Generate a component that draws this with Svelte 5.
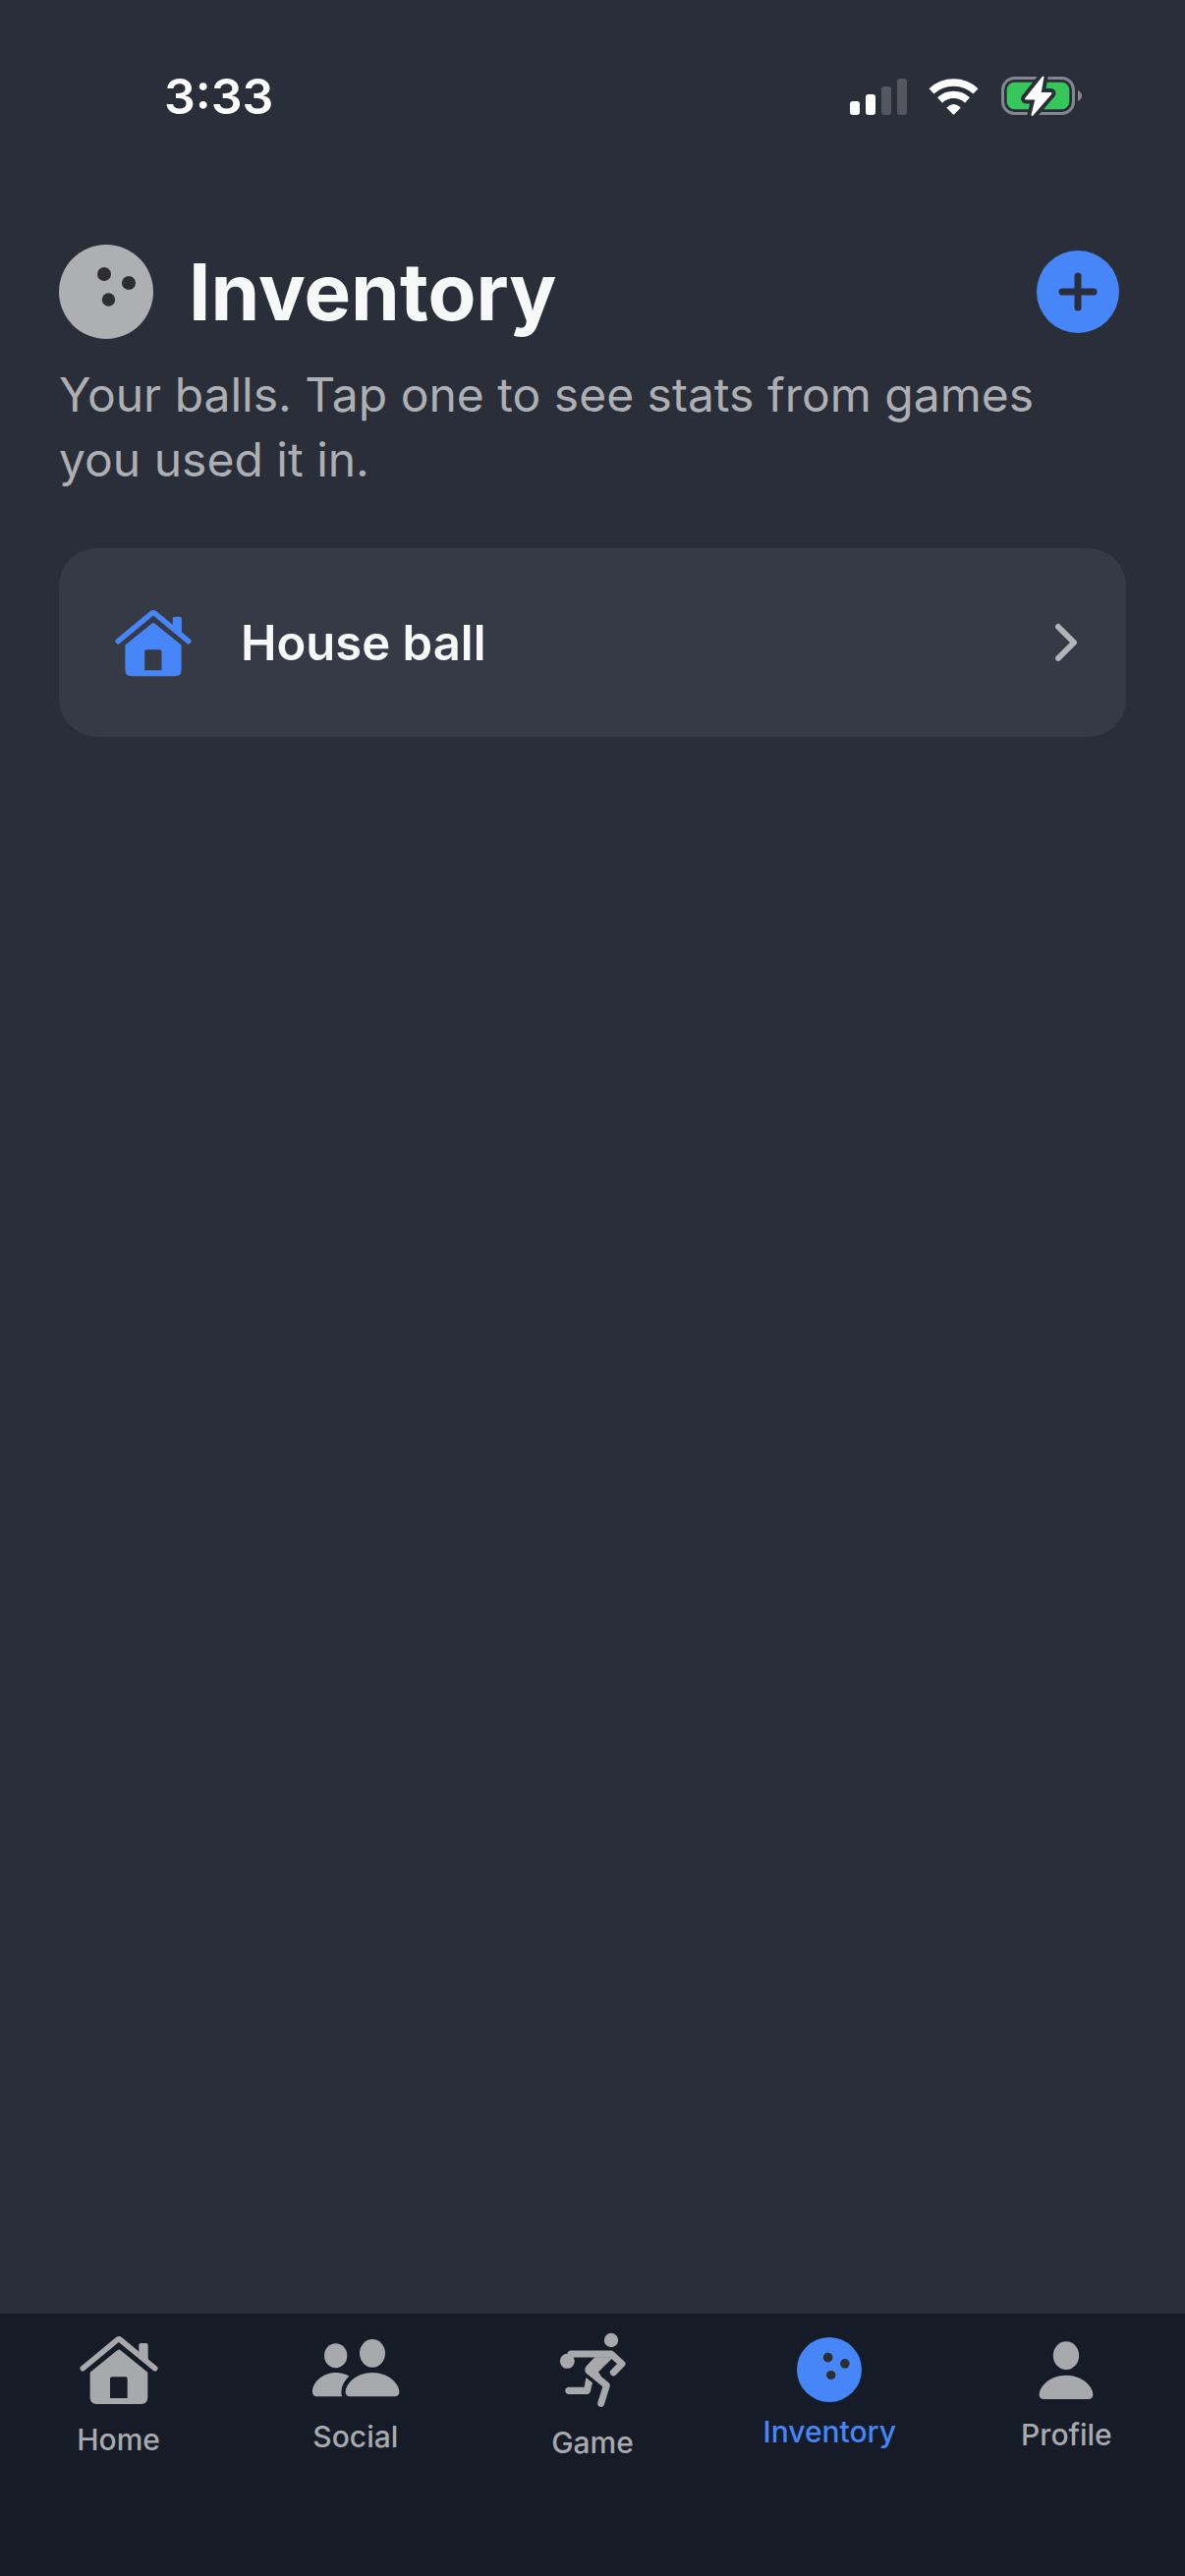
<script lang="ts">
  type TabId = 'home' | 'social' | 'game' | 'inventory' | 'profile';

  const tabs: { id: TabId; label: string }[] = [
    { id: 'home', label: 'Home' },
    { id: 'social', label: 'Social' },
    { id: 'game', label: 'Game' },
    { id: 'inventory', label: 'Inventory' },
    { id: 'profile', label: 'Profile' },
  ];

  const balls = [{ id: 1, name: 'House ball' }];

  let active = $state<TabId>('inventory');
</script>

{#snippet house(width: number, height: number)}
  <svg {width} {height} viewBox="121 93 240 246" aria-hidden="true">
    <path d="M131 212 L236 125 Q241 121 246 125 L351 212" fill="none" stroke="currentColor" stroke-width="17" stroke-linecap="round" />
    <path d="M302 165 V141 q0-6 6-6 h16 q6 0 6 6 V192 Z" fill="currentColor" />
    <path
      fill="currentColor"
      fill-rule="evenodd"
      d="M153 224 L236 157 Q241 152 246 157 L329 224 V301 Q329 321 309 321 H173 Q153 321 153 301 Z M214 303 H267 V244 q0-6-6-6 H220 q-6 0-6 6 Z"
    />
  </svg>
{/snippet}

{#snippet ball(size: number)}
  <svg width={size} height={size} viewBox="0 0 96 96" aria-hidden="true">
    <circle cx="48" cy="48" r="48" fill="currentColor" />
    <g fill="#2e2e2e">
      <circle cx="46" cy="30" r="7" />
      <circle cx="71" cy="39" r="7" />
      <circle cx="50.500" cy="56" r="6.700" />
    </g>
  </svg>
{/snippet}

<div class="app">
  <div class="status-bar">
    <span class="time">3:33</span>
    <div class="status-icons">
      <svg width="58" height="38" viewBox="0 0 58 38" fill="#fff" aria-hidden="true">
        <rect x="0" y="24" width="10" height="14" rx="3" />
        <rect x="16" y="17" width="10" height="21" rx="3" />
        <rect x="32" y="9" width="10" height="29" rx="3" opacity="0.2" />
        <rect x="48" y="1" width="10" height="37" rx="3" opacity="0.2" />
      </svg>
      <svg width="52" height="38" viewBox="0 0 52 38" aria-hidden="true">
        <path d="M3 13.900 A33 33 0 0 1 48 13.900" fill="none" stroke="#fff" stroke-width="7.400" />
        <path d="M11.500 23 A20.500 20.500 0 0 1 39.500 23" fill="none" stroke="#fff" stroke-width="7.200" />
        <path d="M18.200 30.500 Q25.500 23.500 32.800 30.500 L26.500 37 Q25.500 38 24.500 37 Z" fill="#fff" />
      </svg>
      <svg width="82" height="46" viewBox="0 0 82 46" aria-hidden="true">
        <rect x="1.500" y="4.500" width="72" height="36" rx="12" fill="none" stroke="#858790" stroke-width="3" />
        <path d="M78 17 Q82 19 82 22.500 T78 28 Z" fill="#858790" />
        <rect x="5.700" y="8.700" width="63.600" height="27.600" rx="8" fill="#35c759" />
        <path
          class="bolt-halo"
          d="M42.500 3.500 L25 25.500 H35.500 L31.500 42 L50.500 20 H39.500 Z"
        />
        <path d="M42.500 3.500 L25 25.500 H35.500 L31.500 42 L50.500 20 H39.500 Z" fill="#fff" stroke="#fff" stroke-width="2" stroke-linejoin="round" />
      </svg>
    </div>
  </div>

  <main>
    <header>
      <span class="header-ball">{@render ball(96)}</span>
      <h1>Inventory</h1>
      <button class="add-btn" aria-label="Add ball">
        <svg width="40" height="40" viewBox="0 0 40 40" aria-hidden="true">
          <path d="M20 4 V36 M4 20 H36" stroke="currentColor" stroke-width="7" stroke-linecap="round" />
        </svg>
      </button>
    </header>

    <p class="intro">Your balls. Tap one to see stats from games you used it in.</p>

    <ul class="ball-list">
      {#each balls as item (item.id)}
        <li>
          <button class="ball-row">
            <span class="ball-icon">{@render house(78, 80)}</span>
            <span class="ball-name">{item.name}</span>
            <svg class="chevron" width="24" height="40" viewBox="0 0 24 40" aria-hidden="true">
              <path d="M4 4 L20 20 L4 36" />
            </svg>
          </button>
        </li>
      {/each}
    </ul>
  </main>

  <nav>
    {#each tabs as tab (tab.id)}
      <button
        class="tab"
        class:active={active === tab.id}
        aria-current={active === tab.id ? 'page' : undefined}
        onclick={() => (active = tab.id)}
      >
        {#if tab.id === 'home'}
          {@render house(80, 82)}
        {:else if tab.id === 'social'}
          <svg width="90" height="76" viewBox="828 102 270 228" fill="currentColor" aria-hidden="true">
            <ellipse cx="902" cy="173" rx="35" ry="37.500" />
            <ellipse cx="1014" cy="166" rx="39" ry="43" />
            <path d="M848 298 C834 298 831 292 831 283 C831 255 862 225 902 225 C918 225 932 229 943 236 C925 252 915 275 921 298 Z" />
            <path d="M950 298 C935 298 932 292 932 283 C932 262 962 225 1014 225 C1066 225 1096 262 1096 283 C1096 292 1093 298 1078 298 Z" />
          </svg>
        {:else if tab.id === 'game'}
          <svg width="68" height="88" viewBox="147 84 204 264" fill="currentColor" aria-hidden="true">
            <circle cx="306" cy="126" r="21.500" />
            <circle cx="172" cy="190" r="22.500" />
            <g fill="none" stroke="currentColor" stroke-width="21" stroke-linecap="round" stroke-linejoin="round">
              <path d="M183 168 H306 L339 198 L313 224" />
              <path d="M238 220 L292 264 L275 319" />
            </g>
            <path d="M256 178 H313 L267 223 L276 238 L245 238 L231 228 Q221 215 231 204 Z" />
            <path d="M229 240 L249 256 L243 282 Q240 291 232 291 H177 a11 11 0 0 1 0-22 H224 Z" />
          </svg>
        {:else if tab.id === 'inventory'}
          {@render ball(66)}
        {:else}
          <svg width="56" height="72" viewBox="172 108 168 216" fill="currentColor" aria-hidden="true">
            <ellipse cx="256" cy="173" rx="39.500" ry="43" />
            <path d="M192 306 C177 306 174 300 174 291 C174 270 204 233 256 233 C308 233 338 270 338 291 C338 300 335 306 320 306 Z" />
          </svg>
        {/if}
        <span class="tab-label">{tab.label}</span>
      </button>
    {/each}
  </nav>
</div>

<style>
  :global(body) {
    background: #2a2e38;
  }

  .app {
    display: flex;
    flex-direction: column;
    min-height: 100vh;
    background: #2a2e38;
    color: #f7f9f8;
    font-family: Inter, 'Liberation Sans', sans-serif;
  }

  svg {
    display: block;
    flex-shrink: 0;
  }

  button {
    margin: 0;
    padding: 0;
    border: none;
    background: none;
    color: inherit;
    font: inherit;
    cursor: pointer;
  }

  .status-bar {
    display: flex;
    align-items: center;
    justify-content: space-between;
    height: 196px;
    padding: 0 105px 0 167px;
  }

  .time {
    color: #fff;
    font-size: 50px;
    font-weight: 600;
  }

  .status-icons {
    display: flex;
    align-items: center;
    gap: 22px;
  }

  .bolt-halo {
    fill: #2a2e38;
    stroke: #2a2e38;
    stroke-width: 10;
    stroke-linejoin: round;
  }

  main {
    flex: 1;
    padding: 53px 60px 60px;
  }

  header {
    display: flex;
    align-items: center;
    padding-right: 7px;
  }

  .header-ball {
    color: #aeafb3;
  }

  h1 {
    flex: 1;
    margin: 0 0 0 36px;
    font-size: 80px;
    font-weight: 700;
    line-height: 96px;
  }

  .add-btn {
    display: flex;
    align-items: center;
    justify-content: center;
    width: 84px;
    height: 84px;
    border-radius: 50%;
    background: #4686f8;
    color: #2a2e38;
  }

  .intro {
    margin: 24px 0 57px;
    padding-right: 60px;
    color: #aeafb3;
    font-size: 48px;
    line-height: 66px;
  }

  .ball-list {
    display: flex;
    flex-direction: column;
    gap: 24px;
    margin: 0;
    padding: 0;
    list-style: none;
  }

  .ball-row {
    display: flex;
    align-items: center;
    width: 100%;
    height: 192px;
    padding: 0 49px 0 57px;
    border-radius: 38px;
    background: #363a44;
    text-align: left;
  }

  .ball-icon {
    color: #4686f8;
  }

  .ball-name {
    flex: 1;
    margin-left: 50px;
    font-size: 49px;
    font-weight: 600;
  }

  .chevron {
    fill: none;
    stroke: #b3b4b7;
    stroke-width: 6;
    stroke-linecap: round;
    stroke-linejoin: round;
  }

  nav {
    display: flex;
    align-items: center;
    padding: 13px 0 118px;
    background: #161c27;
  }

  .tab {
    display: flex;
    flex: 1;
    flex-direction: column;
    align-items: center;
    gap: 12px;
    color: #a8a9ad;
  }

  .tab.active {
    color: #4686f8;
  }

  .tab-label {
    font-size: 30px;
    font-weight: 500;
    line-height: 36px;
  }
</style>
